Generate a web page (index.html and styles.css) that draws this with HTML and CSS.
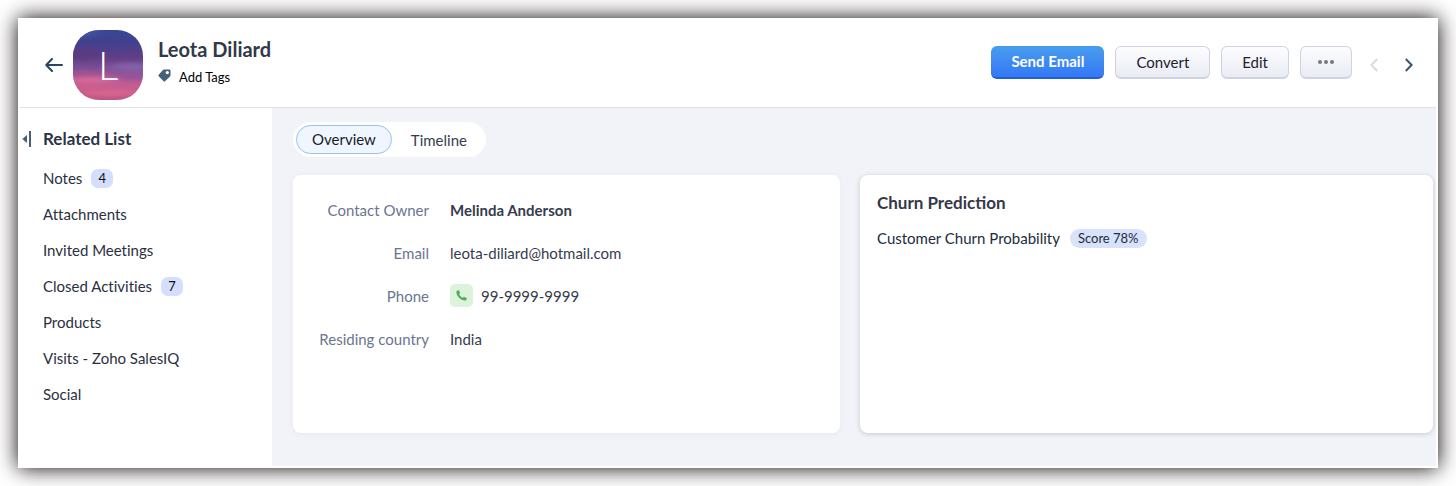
FILE: index.html
```html
<!DOCTYPE html>
<html lang="en">
<head>
    <meta charset="UTF-8">
    <meta name="viewport" content="width=device-width, initial-scale=1.0">
    <title>Leota Diliard</title>
    <link rel="stylesheet" href="styles.css">
</head>
<body>

<div class="window">
    <!-- Contact header -->
    <header class="header">
        <a class="back" href="#" aria-label="Back">
            <svg width="18" height="14" viewBox="0 0 18 14" fill="none" stroke="#2b4560" stroke-width="2" stroke-linecap="round" stroke-linejoin="round"><path d="M17 7H1.200M7 1L1.200 7L7 13"/></svg>
        </a>
        <div class="avatar">
            <svg class="avatar-sky" viewBox="0 0 70 70" aria-hidden="true">
                <defs>
                    <linearGradient id="sky" x1="0" y1="0" x2="0" y2="1">
                        <stop offset="0" stop-color="#384796"/>
                        <stop offset="0.200" stop-color="#44408c"/>
                        <stop offset="0.400" stop-color="#623f87"/>
                        <stop offset="0.550" stop-color="#7b4f97"/>
                        <stop offset="0.680" stop-color="#a85794"/>
                        <stop offset="0.800" stop-color="#cb5f8f"/>
                        <stop offset="1" stop-color="#bd5583"/>
                    </linearGradient>
                    <filter id="soft" filterUnits="userSpaceOnUse" x="-40" y="-40" width="150" height="150" color-interpolation-filters="sRGB"><feGaussianBlur stdDeviation="6 2"/></filter>
                </defs>
                <rect width="70" height="70" fill="url(#sky)"/>
                <g filter="url(#soft)">
                    <ellipse cx="10" cy="3" rx="16" ry="4" fill="#4254a0"/>
                    <ellipse cx="10" cy="24" rx="20" ry="4" fill="#5b3a80"/>
                    <ellipse cx="60" cy="37" rx="24" ry="4" fill="#8461a9"/>
                    <ellipse cx="10" cy="43" rx="18" ry="2" fill="#a45391"/>
                    <ellipse cx="60" cy="46" rx="24" ry="3" fill="#915496"/>
                    <ellipse cx="20" cy="50" rx="26" ry="3" fill="#dc6a98"/>
                    <ellipse cx="45" cy="56" rx="20" ry="1" fill="#b65991"/>
                    <ellipse cx="38" cy="63" rx="30" ry="3" fill="#da6691"/>
                </g>
            </svg>
            <span class="avatar-letter">L</span>
        </div>
        <div class="person">
            <h1 class="person-name">Leota Diliard</h1>
            <button class="tags-btn" type="button">
                <svg width="13" height="13" viewBox="0 0 13 13"><path fill="#466079" fill-rule="evenodd" d="M5.800.600H11.500Q12.500.600 12.500 1.600V6.500Q12.500 7.100 12 7.600L7 12.300Q6.300 12.900 5.600 12.200L.700 7.300Q0 6.600.700 5.800L4.700 1.200Q5.200.600 5.800.600ZM9.300 1.900A1.700 1.700 0 1 0 9.300 5.300A1.700 1.700 0 1 0 9.300 1.900Z"/></svg>
                Add Tags
            </button>
        </div>
        <div class="actions">
            <button class="btn btn-primary" type="button">Send Email</button>
            <button class="btn" type="button">Convert</button>
            <button class="btn" type="button">Edit</button>
            <button class="btn btn-more" type="button" aria-label="More">
                <svg width="16" height="4" viewBox="0 0 16 4" fill="#77787d"><circle cx="2" cy="2" r="2"/><circle cx="8" cy="2" r="2"/><circle cx="14" cy="2" r="2"/></svg>
            </button>
        </div>
        <div class="pager">
            <button class="pager-btn" type="button" aria-label="Previous" disabled>
                <svg width="8" height="14" viewBox="0 0 8 14" fill="none" stroke="#d6dce3" stroke-width="2"><path d="M7.200 1L1.400 7L7.200 13"/></svg>
            </button>
            <button class="pager-btn" type="button" aria-label="Next">
                <svg width="8" height="14" viewBox="0 0 8 14" fill="none" stroke="#3b566f" stroke-width="2"><path d="M.800 1L6.600 7L.800 13"/></svg>
            </button>
        </div>
    </header>

    <div class="body">
        <!-- Related list -->
        <nav class="sidebar">
            <div class="sidebar-head">
                <button class="collapse-btn" type="button" aria-label="Collapse">
                    <svg width="9" height="16" viewBox="0 0 9 16" fill="#466079"><path d="M5 4V12L.300 8Z"/><rect x="7" width="2" height="16"/></svg>
                </button>
                <h2 class="sidebar-title">Related List</h2>
            </div>
            <ul class="related">
                <li><a href="#">Notes</a><span class="count">4</span></li>
                <li><a href="#">Attachments</a></li>
                <li><a href="#">Invited Meetings</a></li>
                <li><a href="#">Closed Activities</a><span class="count">7</span></li>
                <li><a href="#">Products</a></li>
                <li><a href="#">Visits - Zoho SalesIQ</a></li>
                <li><a href="#">Social</a></li>
            </ul>
        </nav>

        <!-- Details -->
        <main class="content">
            <div class="tabs">
                <button class="tab active" type="button">Overview</button>
                <button class="tab" type="button">Timeline</button>
            </div>
            <div class="cards">
                <section class="card">
                    <dl class="details">
                        <dt>Contact Owner</dt>
                        <dd class="owner">Melinda Anderson</dd>
                        <dt>Email</dt>
                        <dd>leota-diliard@hotmail.com</dd>
                        <dt>Phone</dt>
                        <dd>
                            <button class="call-btn" type="button" aria-label="Call">
                                <svg width="11" height="11" viewBox="0 0 11 11"><path fill="#4caf50" d="M1.200.700L2.400.200Q2.900 0 3.100.500L4 2.700Q4.200 3.200 3.800 3.500L3 4.200Q4.200 6.500 6.700 7.900L7.500 7Q7.800 6.700 8.300 6.900L10.500 7.900Q11 8.100 10.800 8.600L10.300 9.900Q10 10.600 9.200 10.600Q5.600 10.500 3 7.800T.300 2Q.400 1 1.200.700Z"/></svg>
                            </button>
                            99-9999-9999
                        </dd>
                        <dt>Residing country</dt>
                        <dd>India</dd>
                    </dl>
                </section>
                <section class="card card-raised">
                    <h2 class="card-title">Churn Prediction</h2>
                    <p class="churn">Customer Churn Probability <span class="score">Score 78%</span></p>
                </section>
            </div>
        </main>
    </div>
</div>

</body>
</html>
```
FILE: styles.css
```css
* {
    box-sizing: border-box;
}
body {
    margin: 0;
    padding: 18px;
    min-height: 100vh;
    display: flex;
    background: #fff;
    font-family: Lato, 'Open Sans', sans-serif;
    font-size: 15px;
    line-height: 20px;
    color: #2b3040;
}
h1, h2, p, ul, dl, dd {
    margin: 0;
    padding: 0;
}
button {
    font: inherit;
    color: inherit;
    padding: 0;
    border: none;
    background: none;
    cursor: pointer;
}
a {
    color: inherit;
    text-decoration: none;
}
svg {
    display: block;
}
.window {
    flex: 1;
    display: flex;
    flex-direction: column;
    padding: 2px;
    background: #fff;
    box-shadow: 0 0 20px #0c0404;
}

/* Header */
.header {
    display: flex;
    align-items: center;
    padding: 10px 23px 7px 25px;
    border-bottom: 1px solid #dfe1e9;
}
.avatar {
    display: grid;
    place-items: center;
    width: 70px;
    height: 70px;
    margin-left: 10px;
    border-radius: 26px;
    overflow: hidden;
}
.avatar-sky, .avatar-letter {
    grid-area: 1 / 1;
}
.avatar-sky {
    width: 100%;
    height: 100%;
}
.avatar-letter {
    font-size: 40px;
    line-height: 40px;
    font-weight: 300;
    color: #fff;
    z-index: 1;
}
.person {
    margin-left: 15px;
    padding-bottom: 8px;
}
.person-name {
    font-size: 20px;
    line-height: 28px;
    font-weight: 700;
    color: #313949;
}
.tags-btn {
    display: flex;
    gap: 8px;
    padding-top: 4px;
    font-size: 13px;
    color: #000;
}
.tags-btn svg {
    margin-top: 2px;
}
.actions {
    display: flex;
    gap: 11px;
    margin-left: auto;
    padding-bottom: 6px;
}
.btn {
    height: 33px;
    padding: 0 20px;
    border: 1px solid #cfd2e0;
    border-bottom-width: 2px;
    border-radius: 6px;
    background: linear-gradient(#fdfdff, #eaecf4);
    color: #1d2130;
}
.btn-primary {
    border: none;
    border-bottom: 2px solid #2260d2;
    background: linear-gradient(#489ded, #3478f6);
    color: #fff;
    font-weight: 700;
}
.btn-more {
    padding: 0 17px;
}
.pager {
    display: flex;
    gap: 27px;
    margin-left: 18px;
}

/* Related list */
.body {
    flex: 1;
    display: flex;
}
.sidebar {
    width: 252px;
    padding: 20px 3px 0 2px;
}
.sidebar-head {
    display: flex;
    align-items: center;
    gap: 12px;
}
.sidebar-title {
    font-size: 17px;
    line-height: 22px;
    font-weight: 700;
    color: #2c3446;
}
.related {
    padding: 10px 0 0 21px;
    list-style: none;
    font-variant-ligatures: none;
}
.related li {
    display: flex;
    align-items: center;
    gap: 9px;
    height: 36px;
}
.count {
    min-width: 22px;
    border-radius: 7px;
    background: #d5defc;
    color: #111;
    font-size: 13px;
    line-height: 19px;
    text-align: center;
}

/* Details */
.content {
    flex: 1;
    display: flex;
    flex-direction: column;
    align-items: flex-start;
    gap: 18px;
    padding: 14px 3px 33px 21px;
    background: #f2f3f8;
}
.tabs {
    display: flex;
    gap: 3px;
    padding: 3px;
    border-radius: 18px;
    background: #fff;
}
.tab {
    height: 29px;
    padding: 0 15px;
    border: 1px solid transparent;
    border-radius: 15px;
    color: #363c4e;
}
.tab.active {
    padding-bottom: 2px;
    border-color: #92c5ee;
    background: #f0f6ff;
    color: #181c25;
}
.cards {
    flex: 1;
    align-self: stretch;
    display: grid;
    grid-template-columns: 547fr 573fr;
    gap: 20px;
}
.card {
    padding: 17px;
    border-radius: 8px;
    background: #fff;
    box-shadow: 0 1px 6px rgba(60, 80, 120, 0.06);
}
.card-raised {
    box-shadow: 0 1px 5px rgba(50, 70, 100, 0.25);
}
.details {
    display: grid;
    grid-template-columns: 119px 1fr;
    grid-auto-rows: 23px;
    gap: 20px 21px;
    align-items: center;
    padding-top: 6px;
}
.details dt {
    color: #6b7590;
    text-align: right;
}
.details dd {
    display: flex;
    align-items: center;
    gap: 8px;
    color: #363c4e;
}
.details .owner {
    font-weight: 700;
}
.call-btn {
    display: grid;
    place-items: center;
    width: 23px;
    height: 23px;
    border-radius: 5px;
    background: #dcf2dd;
}
.card-title {
    font-size: 17px;
    line-height: 22px;
    font-weight: 700;
    color: #343849;
}
.churn {
    display: flex;
    align-items: center;
    gap: 10px;
    padding-top: 14px;
    color: #222c3c;
}
.score {
    padding: 0 8px;
    border-radius: 10px;
    background: #d8e2fb;
    font-size: 13px;
    line-height: 19px;
}
```
